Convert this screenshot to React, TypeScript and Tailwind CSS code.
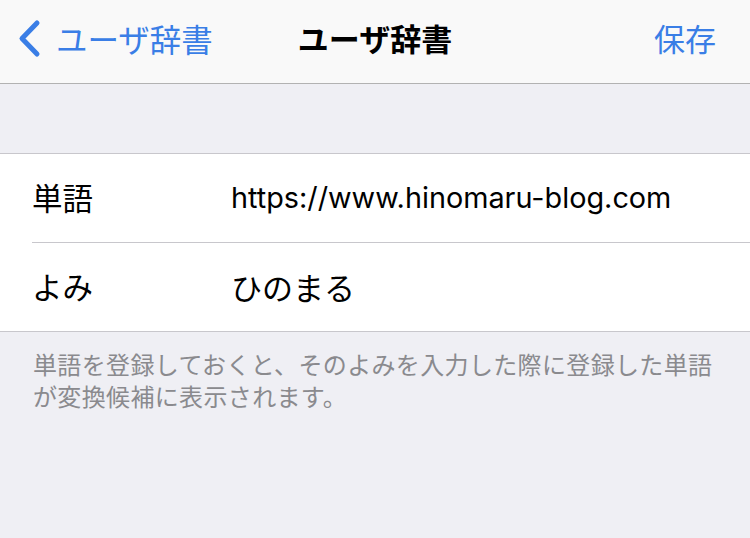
import React from 'react';

const JP = '"Noto Sans CJK JP", sans-serif';
const LATIN = 'Inter, "Noto Sans CJK JP", sans-serif';

const BackChevron: React.FC = () => (
    <svg width="24" height="40" viewBox="0 0 24 40" fill="none" className="shrink-0">
        <path d="M19 4 L4 19.5 L19 35" stroke="#3a7ee6" strokeWidth="5" strokeLinecap="round" strokeLinejoin="round" />
    </svg>
);

const Row: React.FC<{ label: string; value: string; latin?: boolean; divider?: boolean }> = ({ label, value, latin, divider }) => (
    <div className="pl-[32px]">
        <div className={`flex items-center ${divider ? 'h-[89px] border-b border-[#c8c7cc]' : 'h-[88px]'}`}>
            <span className="w-[199px] text-[30.5px] text-black" style={{ fontFamily: JP }}>{label}</span>
            {latin ? (
                <span className="text-[28.8px] text-black" style={{ fontFamily: LATIN }}>{value}</span>
            ) : (
                <span className="text-[31px] text-black" style={{ fontFamily: JP }}>{value}</span>
            )}
        </div>
    </div>
);

export default function App() {
    return (
        <div className="flex h-[538px] w-[750px] flex-col overflow-hidden bg-[#efeff4]" style={{ fontFamily: JP }}>
            <header className="grid h-[84px] shrink-0 grid-cols-[1fr_auto_1fr] items-center border-b border-[#b2b2b2] bg-[#f9f9f9] pb-[6px]">
                <div className="flex items-center gap-[14px] pl-[18px]">
                    <BackChevron />
                    <span className="text-[31.5px] text-[#3a7ee6]">ユーザ辞書</span>
                </div>
                <h1 className="text-[31px] font-bold text-black">ユーザ辞書</h1>
                <span className="justify-self-end pr-[34px] text-[31px] text-[#3a7ee6]">保存</span>
            </header>

            <div className="h-[69px] shrink-0" />

            <section className="border-y border-[#c8c7cc] bg-white">
                <Row label="単語" value="https://www.hinomaru-blog.com" latin divider />
                <Row label="よみ" value="ひのまる" />
            </section>

            <p className="px-[33px] pt-[16px] text-[24px] leading-[32px] tracking-[0.35px] text-[#8a8a8e]">
                単語を登録しておくと、そのよみを入力した際に登録した単語が変換候補に表示されます。
            </p>
        </div>
    );
}
